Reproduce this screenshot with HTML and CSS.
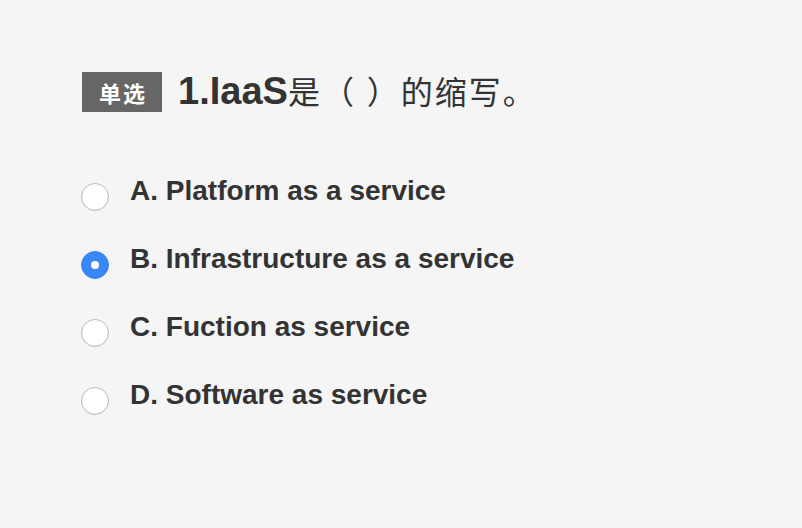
FILE: index.html
```html
<!DOCTYPE html>
<html lang="zh">
<head>
<meta charset="utf-8">
<link rel="stylesheet" href="styles.css">
</head>
<body>
<div class="question">
  <div class="title">
    <span class="badge">单选</span>
    <span class="qtext"><b class="num">1.IaaS</b><span class="cjk">是（ ）的缩写。</span></span>
  </div>
  <ul class="options">
    <li class="option"><span class="radio"></span><span class="label">A. Platform as a service</span></li>
    <li class="option"><span class="radio checked"></span><span class="label">B. Infrastructure as a service</span></li>
    <li class="option"><span class="radio"></span><span class="label">C. Fuction as service</span></li>
    <li class="option"><span class="radio"></span><span class="label">D. Software as service</span></li>
  </ul>
</div>
</body>
</html>
```
FILE: styles.css
```css
html, body {
  margin: 0;
  padding: 0;
  background: #f4f5f4;
}
body {
  width: 802px;
  height: 528px;
  overflow: hidden;
  font-family: "Liberation Sans", Arial, "Noto Sans CJK SC", sans-serif;
  color: #333;
}
.question {
  padding: 72px 0 0 82px;
}
.title {
  display: flex;
  align-items: center;
  height: 40px;
}
.badge {
  display: flex;
  align-items: center;
  justify-content: center;
  width: 80px;
  height: 40px;
  background: #666;
  color: #fff;
  font-family: "Noto Sans CJK SC", sans-serif;
  font-weight: 700;
  font-size: 22px;
  letter-spacing: 2px;
  box-sizing: border-box;
  padding-left: 2px;
}
.qtext {
  margin-left: 16px;
  font-size: 32px;
  line-height: 40px;
  font-family: "Liberation Sans", "Noto Sans CJK SC", sans-serif;
  color: #333;
}
.num {
  font-weight: 700;
  font-size: 38px;
}
.cjk {
  letter-spacing: 2px;
}
.options {
  list-style: none;
  margin: 0;
  padding: 0;
  margin-top: 45px;
}
.option {
  display: flex;
  align-items: center;
  height: 68px;
}
.radio {
  width: 26px;
  height: 26px;
  border-radius: 50%;
  border: 1px solid #b9b9b9;
  background: #fff;
  box-shadow: inset 0 -1px 1px rgba(0,0,0,0.05);
  margin-top: 12px;
  margin-left: -1px;
  position: relative;
  flex-shrink: 0;
}
.radio.checked {
  background: #3b86f7;
  border-color: #3b86f7;
}
.radio.checked::after {
  content: "";
  position: absolute;
  left: 50%;
  top: 50%;
  width: 8px;
  height: 8px;
  margin: -4px 0 0 -4px;
  border-radius: 50%;
  background: #fff;
}
.label {
  margin-left: 21px;
  font-size: 28px;
  font-weight: 700;
  color: #333;
}
```
